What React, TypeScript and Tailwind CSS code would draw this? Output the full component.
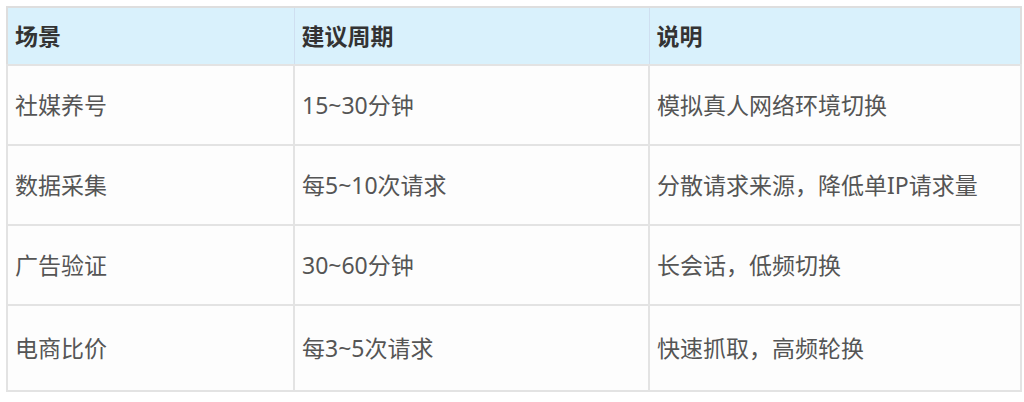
import React from "react";

const rows: [string, string, string][] = [
  ["社媒养号", "15~30分钟", "模拟真人网络环境切换"],
  ["数据采集", "每5~10次请求", "分散请求来源，降低单IP请求量"],
  ["广告验证", "30~60分钟", "长会话，低频切换"],
  ["电商比价", "每3~5次请求", "快速抓取，高频轮换"],
];

export default function App() {
  return (
    <div
      className="w-[1024px] h-[402px] bg-white pt-[6px] pl-[6px]"
      style={{ fontFamily: '"Noto Sans", "Noto Sans CJK SC", sans-serif' }}
    >
      <table className="w-[1014px] border-collapse border-2 border-[#dedede] text-[23px] table-fixed">
        <colgroup>
          <col className="w-[287px]" />
          <col className="w-[355px]" />
          <col className="w-[372px]" />
        </colgroup>
        <thead>
          <tr className="h-[58px] bg-[#d9f1fc]">
            {["场景", "建议周期", "说明"].map((h) => (
              <th
                key={h}
                className="border border-[#cfdff0] px-[7px] text-left font-bold text-[#333333]"
              >
                {h}
              </th>
            ))}
          </tr>
        </thead>
        <tbody>
          {rows.map((r, i) => (
            <tr key={i} className={`bg-[#fdfdfd] ${i === 3 ? "h-[86px]" : "h-[80px]"}`}>
              {r.map((c, j) => (
                <td
                  key={j}
                  className="border-2 border-[#e3e3e3] px-[7px] text-[#555555]"
                >
                  {c}
                </td>
              ))}
            </tr>
          ))}
        </tbody>
      </table>
    </div>
  );
}
